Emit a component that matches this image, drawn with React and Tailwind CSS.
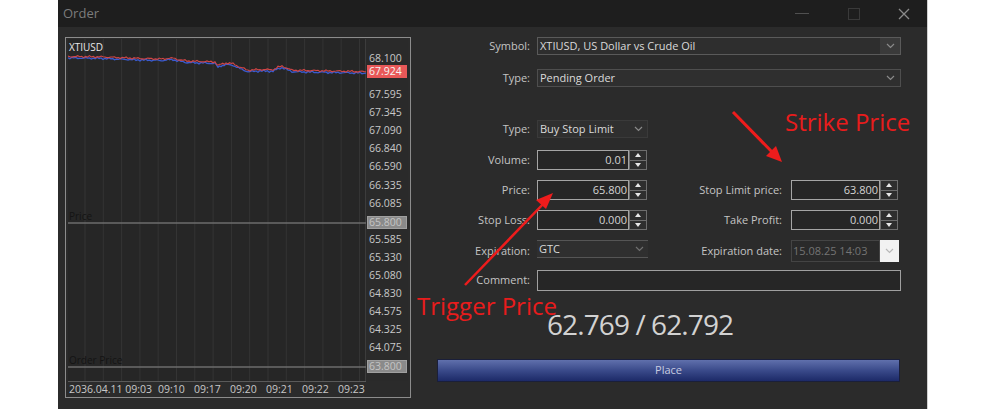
import React from "react";

function Chevron({ color = "#8a8a8a" }) {
  return (
    <svg width="9" height="6" viewBox="0 0 9 6">
      <path d="M1 1 L4.5 4.5 L8 1" fill="none" stroke={color} strokeWidth="1.2" />
    </svg>
  );
}

function Spinner() {
  return (
    <div className="w-[18px] h-[20px] flex flex-col">
      <div className="flex-1 border border-[#6e6e6e] bg-[#2e2e2e] flex items-center justify-center">
        <svg width="6" height="4" viewBox="0 0 6 4"><path d="M0 4 L3 0 L6 4 Z" fill="#e8e8e8" /></svg>
      </div>
      <div className="flex-1 border border-t-0 border-[#6e6e6e] bg-[#2e2e2e] flex items-center justify-center">
        <svg width="6" height="4" viewBox="0 0 6 4"><path d="M0 0 L3 4 L6 0 Z" fill="#e8e8e8" /></svg>
      </div>
    </div>
  );
}

function NumInput({ value, w }) {
  return (
    <div className="flex">
      <div className={w + " h-[20px] border border-[#a5a5a5] bg-[#262626] flex items-center justify-end pr-[1px] text-[11px] text-[#d4d4d4]"}>
        {value}
      </div>
      <Spinner />
    </div>
  );
}

function Label({ children }) {
  return <div className="w-[119px] shrink-0 text-right text-[11px] text-[#c4c4c4] mr-[7px]">{children}</div>;
}

function RLabel({ children }) {
  return <div className="w-[135px] shrink-0 text-right text-[11px] text-[#c4c4c4] mr-[9px]">{children}</div>;
}

const ticks = [
  { v: "68.100", y: 19 },
  { v: "67.595", y: 55 },
  { v: "67.345", y: 73 },
  { v: "67.090", y: 91 },
  { v: "66.840", y: 109 },
  { v: "66.590", y: 127 },
  { v: "66.335", y: 146 },
  { v: "66.085", y: 164 },
  { v: "65.585", y: 200 },
  { v: "65.330", y: 218 },
  { v: "65.080", y: 236 },
  { v: "64.830", y: 254 },
  { v: "64.575", y: 272 },
  { v: "64.325", y: 290 },
  { v: "64.075", y: 308 },
];

const baseLine = [
  [0, 17.7], [35, 18.2], [60, 19.3], [72, 19.8], [95, 20.3], [100, 19.6], [105, 19.4], [109, 20.5],
  [119, 22.3], [135, 22.8], [147, 23.2], [150, 27], [153, 25.5], [158, 24.3], [165, 25],
  [172, 28.5], [180, 31.5], [192, 30.8], [205, 31], [210, 28.5], [214, 27.5], [218, 29],
  [224, 31.5], [240, 31.8], [260, 32.2], [280, 32.6], [298, 33],
];

function jag(points, dy, seed) {
  const out = [];
  for (let i = 0; i < points.length - 1; i++) {
    const [x0, y0] = points[i];
    const [x1, y1] = points[i + 1];
    const steps = Math.max(1, Math.round((x1 - x0) / 2));
    for (let s = 0; s < steps; s++) {
      const t = s / steps;
      const x = x0 + (x1 - x0) * t;
      const n = Math.sin((x + seed) * 1.7) * 0.6 + Math.sin((x + seed) * 0.53) * 0.5;
      out.push(`${x.toFixed(1)},${(y0 + (y1 - y0) * t + dy + n).toFixed(1)}`);
    }
  }
  const last = points[points.length - 1];
  out.push(`${last[0]},${last[1] + dy}`);
  return out.join(" ");
}

function Chart() {
  const vlines = [];
  for (let x = 17; x < 298; x += 18.3) vlines.push(x);
  return (
    <div className="ml-[7px] mt-[10px] w-[346px] h-[361px] border border-[#8c8c8c] px-[2px] pt-[1px] flex flex-col">
      <div className="flex h-[342px]">
        <div className="relative w-[298px] h-full bg-[#262626] border-r border-[#3c3c3c]">
          <svg className="absolute inset-0" width="298" height="342">
            {vlines.map((x, i) => (
              <line key={i} x1={x} y1="0" x2={x} y2="342" stroke="#343434" strokeWidth="1" />
            ))}
            <line x1="0" y1="184" x2="298" y2="184" stroke="#6c6c6c" strokeWidth="1.5" />
            <line x1="0" y1="328" x2="298" y2="328" stroke="#6c6c6c" strokeWidth="1.5" />
            <polyline points={jag(baseLine, 1.2, 3)} fill="none" stroke="#3a5bd0" strokeWidth="1.3" />
            <polyline points={jag(baseLine, -0.3, 11)} fill="none" stroke="#d24646" strokeWidth="1.1" />
          </svg>
          <div className="absolute left-[1px] top-[2px] text-[10px] leading-[12px] text-[#e6e6e6]">XTIUSD</div>
          <div className="absolute left-[1px] top-[171px] text-[10px] leading-[12px] text-[#141414]">Price</div>
          <div className="absolute left-[1px] top-[315px] text-[10px] leading-[12px] text-[#141414]">Order Price</div>
        </div>
        <div className="relative flex-1 h-full bg-[#2a2a2a]">
          {ticks.map((t) => (
            <div key={t.v} className="absolute left-[3px] text-[10.5px] leading-[12px] text-[#c8c8c8]" style={{ top: t.y - 6 }}>
              {t.v}
            </div>
          ))}
          <div className="absolute left-[1px] top-[26px] w-[40px] h-[13px] bg-[#e85858] text-[10.5px] leading-[13px] text-[#f4f4f4] pl-[2px]">67.924</div>
          <div className="absolute left-[1px] top-[177px] w-[40px] h-[13px] bg-[#8a8a8a] border border-[#a0a0a0] text-[10.5px] leading-[11px] text-[#c4c4c4] pl-[1px]">65.800</div>
          <div className="absolute left-[1px] top-[321px] w-[40px] h-[13px] bg-[#8a8a8a] border border-[#a0a0a0] text-[10.5px] leading-[11px] text-[#c4c4c4] pl-[1px]">63.800</div>
        </div>
      </div>
      <div className="h-[15px] border-t border-[#5a5a5a] flex items-center text-[10.5px] leading-[12px] text-[#c8c8c8] w-[298px]">
        <div className="w-[90px] pl-[1px]">2036.04.11 09:03</div>
        <div className="w-[36px]">09:10</div>
        <div className="w-[36px]">09:17</div>
        <div className="w-[36px]">09:20</div>
        <div className="w-[36px]">09:21</div>
        <div className="w-[36px]">09:22</div>
        <div className="w-[28px]">09:23</div>
      </div>
    </div>
  );
}

function Form() {
  return (
    <div className="flex-1 flex flex-col pt-[10px] text-[11px]">
      <div className="flex items-center h-[18px]">
        <Label>Symbol:</Label>
        <div className="w-[364px] h-[18px] border border-[#5a5a5a] bg-[#2e2e2e] flex items-center text-[#dadada]">
          <span className="pl-[2px] flex-1">XTIUSD, US Dollar vs Crude Oil</span>
          <div className="w-[20px] h-full bg-[#3a3a3a] flex items-center justify-center"><Chevron /></div>
        </div>
      </div>
      <div className="flex items-center h-[18px] mt-[14px]">
        <Label>Type:</Label>
        <div className="w-[364px] h-[18px] border border-[#4e4e4e] bg-[#2f2f2f] flex items-center text-[#dadada]">
          <span className="pl-[2px] flex-1">Pending Order</span>
          <div className="w-[20px] h-full flex items-center justify-center"><Chevron /></div>
        </div>
      </div>
      <div className="flex items-center h-[18px] mt-[33px]">
        <Label>Type:</Label>
        <div className="w-[111px] h-[18px] border border-[#3a3a3a] bg-[#2f2f2f] flex items-center text-[#dadada]">
          <span className="pl-[2px] flex-1">Buy Stop Limit</span>
          <div className="w-[18px] h-full flex items-center justify-center"><Chevron /></div>
        </div>
      </div>
      <div className="flex items-center h-[20px] mt-[12px]">
        <Label>Volume:</Label>
        <NumInput value="0.01" w="w-[92px]" />
      </div>
      <div className="flex items-center h-[20px] mt-[10px]">
        <Label>Price:</Label>
        <NumInput value="65.800" w="w-[92px]" />
        <RLabel>Stop Limit price:</RLabel>
        <NumInput value="63.800" w="w-[89px]" />
      </div>
      <div className="flex items-center h-[20px] mt-[10px]">
        <Label>Stop Loss:</Label>
        <NumInput value="0.000" w="w-[92px]" />
        <RLabel>Take Profit:</RLabel>
        <NumInput value="0.000" w="w-[89px]" />
      </div>
      <div className="flex items-center h-[22px] mt-[10px]">
        <Label>Expiration:</Label>
        <div className="w-[111px] h-[18px] self-start border-y border-[#555555] bg-[#2f2f2f] flex items-center text-[#dadada]">
          <span className="pl-[2px] flex-1">GTC</span>
          <div className="w-[18px] h-full flex items-center justify-center"><Chevron color="#707070" /></div>
        </div>
        <div className="w-[135px] shrink-0 text-right text-[#c4c4c4] mr-[9px] ml-[-1px]">Expiration date:</div>
        <div className="w-[89px] h-[22px] border border-[#444444] bg-[#2a2a2a] flex items-center pl-[1px] text-[#747474]">15.08.25 14:03</div>
        <div className="w-[19px] h-[22px] bg-[#f2f2f2] flex items-center justify-center"><Chevron color="#b8b8b8" /></div>
      </div>
      <div className="flex items-center h-[21px] mt-[8px]">
        <Label>Comment:</Label>
        <div className="w-[364px] h-[21px] border border-[#a0a0a0] bg-[#262626]" />
      </div>
      <div className="mt-[15px] ml-[136px] h-[36px] flex items-center text-[28px] leading-[36px] tracking-[-0.9px] text-[#d2d2d2]">
        62.769 / 62.792
      </div>
      <div className="mt-[17px] ml-[26px] w-[463px] h-[23px] border border-[#1a1f3a] bg-gradient-to-b from-[#6070ac] via-[#3a4a8a] to-[#1d2a68] flex items-center justify-center text-[#c8cce0]">
        Place
      </div>
    </div>
  );
}

export default function App() {
  return (
    <div className="w-[987px] h-[411px] bg-white font-['Open_Sans',sans-serif] overflow-hidden">
      <div className="relative ml-[58px] w-[870px] h-[409px] bg-[#2b2b2b] border-r border-[#d0d0d0] flex flex-col">
        <div className="h-[27px] bg-[#1e1e1e] flex items-center">
          <span className="pl-[5px] text-[13px] text-[#7c7c7c]">Order</span>
          <div className="ml-auto flex h-full">
            <div className="w-[52px] flex items-center justify-center">
              <div className="w-[14px] h-[1px] bg-[#505050]" />
            </div>
            <div className="w-[52px] flex items-center justify-center">
              <div className="w-[12px] h-[12px] border border-[#3a3a3a]" />
            </div>
            <div className="w-[47px] flex items-center justify-center">
              <svg width="12" height="12" viewBox="0 0 12 12"><path d="M1 1 L11 11 M11 1 L1 11" stroke="#8a8a8a" strokeWidth="1.3" /></svg>
            </div>
          </div>
        </div>
        <div className="flex flex-1">
          <Chart />
          <Form />
        </div>
        <svg className="absolute inset-0 pointer-events-none" width="870" height="409">
          <line x1="675" y1="112" x2="716" y2="154" stroke="#ee1c1c" strokeWidth="3" />
          <polygon points="724,162 708,156 718,146" fill="#ee1c1c" />
          <line x1="407" y1="285" x2="488" y2="201" stroke="#ee1c1c" strokeWidth="2.5" />
          <polygon points="495,193 478,200 488,209" fill="#ee1c1c" />
        </svg>
        <div className="absolute left-[727px] top-[106px] text-[24px] leading-[32px] text-[#e81c1c]">Strike Price</div>
        <div className="absolute left-[359px] top-[290px] text-[24px] leading-[32px] text-[#e81c1c]">Trigger Price</div>
      </div>
    </div>
  );
}
